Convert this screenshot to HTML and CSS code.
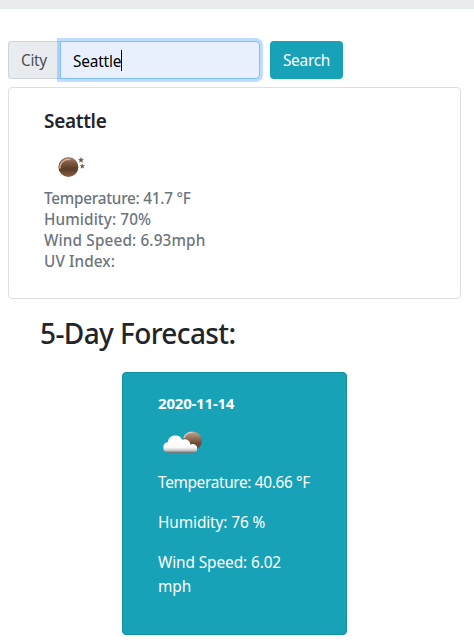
FILE: index.html
```html
<!DOCTYPE html>
<html lang="en">
<head>
<meta charset="utf-8">
<title>Weather Dashboard</title>
<link rel="stylesheet" href="styles.css">
</head>
<body>
<header class="banner"></header>
<main class="page">
  <form class="search">
    <label class="search-label" for="city"><span>City</span></label>
    <div class="search-field" id="city"><span class="search-text">Seattle</span><i class="caret"></i></div>
    <button class="search-button" type="button"><span>Search</span></button>
  </form>
  <section class="current">
    <h5 class="city-name"><span>Seattle</span></h5>
    <svg class="current-icon" width="50" height="50" viewBox="0 0 50 50" aria-hidden="true">
      <defs>
        <linearGradient id="moon" x1="0" y1="0" x2="0" y2="1">
          <stop offset="0" stop-color="#b28d72"/><stop offset=".25" stop-color="#825d43"/>
          <stop offset=".6" stop-color="#5b3c28"/><stop offset="1" stop-color="#8a5e41"/>
        </linearGradient>
      </defs>
      <circle cx="24.4" cy="26" r="10" fill="url(#moon)"/>
      <path d="M16 27.5a8.5 8.5 0 0 1 10-9" fill="none" stroke="#d8b9a3" stroke-width="1.3"/>
      <path d="M37 16.6l.7 1.6 1.8.1-1.4 1.2.5 1.8-1.6-1-1.6 1 .5-1.8-1.4-1.2 1.8-.1zM38.3 23l.6 1.4 1.6.1-1.2 1.1.4 1.6-1.4-.9-1.4.9.4-1.6-1.2-1.1 1.6-.1z" fill="#735044" stroke="#735044" stroke-width=".4"/>
    </svg>
    <ul class="readings">
      <li class="temperature"><span>Temperature: 41.7 °F</span></li>
      <li class="humidity"><span>Humidity: 70%</span></li>
      <li class="wind"><span>Wind Speed: 6.93mph</span></li>
      <li class="uv"><span>UV Index:</span></li>
    </ul>
  </section>
  <h2 class="forecast-title"><span>5-Day Forecast:</span></h2>
  <section class="day">
    <h6 class="day-date"><span>2020-11-14</span></h6>
    <svg class="day-icon" width="50" height="50" viewBox="0 0 50 50" aria-hidden="true">
      <defs>
        <linearGradient id="sphere" x1="0" y1="0" x2="0" y2="1">
          <stop offset="0" stop-color="#c3a898"/><stop offset=".4" stop-color="#8b6a54"/>
          <stop offset=".65" stop-color="#644a38"/><stop offset="1" stop-color="#735844"/>
        </linearGradient>
        <linearGradient id="cloud" x1="0" y1="0" x2="0" y2="1">
          <stop offset="0" stop-color="#fff"/><stop offset=".68" stop-color="#fbfbfb"/>
          <stop offset=".84" stop-color="#ccc"/><stop offset=".94" stop-color="#8f9292"/><stop offset="1" stop-color="#56676b"/>
        </linearGradient>
      </defs>
      <circle cx="34.3" cy="24" r="9.6" fill="url(#sphere)"/>
      <path d="M25.8 21a9 9 0 0 1 9-5.5" fill="none" stroke="#decabd" stroke-width="1.2"/>
      <path d="M10 36a5.3 5.3 0 0 1-4.7-5.4 5.6 5.6 0 0 1 4.5-5.5 7.6 7.6 0 0 1 14.4-2.3 5.5 5.5 0 0 1 8.1 5 4.4 4.4 0 0 1 6.9 3.9c0 2.5-1.6 4.3-3.8 4.3z" fill="url(#cloud)"/>
    </svg>
    <p class="day-temperature"><span>Temperature: 40.66 °F</span></p>
    <p class="day-humidity"><span>Humidity: 76 %</span></p>
    <p class="day-wind"><span>Wind Speed: 6.02<br>mph</span></p>
  </section>
</main>
</body>
</html>
```
FILE: styles.css
```css
* { box-sizing: border-box; }
body {
  margin: 0;
  background: #fff;
  color: #212529;
  font: 400 15.4px/24px "Noto Sans", "Open Sans", sans-serif;
  letter-spacing: -.35px;
  white-space: nowrap;
}
h2, h5, h6, p, ul { margin: 0; padding: 0; }
ul { list-style: none; }
svg { display: block; }
.banner { height: 9px; background: #e9ecef; }
.page { padding: 32px 13px 0 8px; }
.search { display: flex; height: 38px; margin-bottom: 8px; }
.search-label {
  width: 52px;
  padding: 7px 0 0 12px;
  border: 1px solid #ced4da;
  border-right: 0;
  border-radius: 4px 0 0 4px;
  background: #e9ecef;
  color: #495057;
}
.search-field {
  display: flex;
  align-items: center;
  width: 200px;
  padding: 3px 12px 0;
  border: 1px solid #80bdff;
  border-radius: 0 4px 4px 0;
  background: #e8f0fe;
  color: #000;
  box-shadow: 0 0 0 3px rgba(0, 123, 255, .25);
}
.search-text { letter-spacing: -.2px; }
.caret { width: 1px; height: 21px; margin-top: -2px; background: #000; }
.search-button {
  width: 73px;
  margin-left: 10px;
  padding: 2px 0 0;
  border: 0;
  border-radius: 4px;
  background: #17a2b8;
  color: #fff;
  font: inherit;
  letter-spacing: -.25px;
}
.current {
  height: 212px;
  padding: 21px 35px 0;
  border: 1px solid #dfdfdf;
  border-radius: 4px;
}
.city-name { font-size: 19px; font-weight: 600; line-height: 24px; letter-spacing: -.3px; }
.current-icon { margin: 8px 0 -3px; }
.readings { color: #6c757d; font-weight: 500; font-size: 15.3px; line-height: 21px; letter-spacing: .1px; }
.readings .temperature { letter-spacing: -.25px; }
.readings .wind { letter-spacing: .15px; }
.forecast-title {
  margin: 15px 0 20px 32px;
  font-size: 28px;
  font-weight: 500;
  line-height: 38px;
  letter-spacing: -.6px;
}
.day {
  width: 225px;
  height: 263px;
  margin-left: 114px;
  padding: 19px 35px 0;
  border: 1px solid #148ea1;
  border-radius: 4px;
  background: #17a2b8;
  color: #fff;
}
.day-date { font-size: 15px; font-weight: 700; line-height: 22px; letter-spacing: -.2px; }
.day-icon { margin: 3px 0 4px; }
.day p { margin-bottom: 16px; }
.day .day-humidity, .day .day-wind { letter-spacing: -.1px; }
```
